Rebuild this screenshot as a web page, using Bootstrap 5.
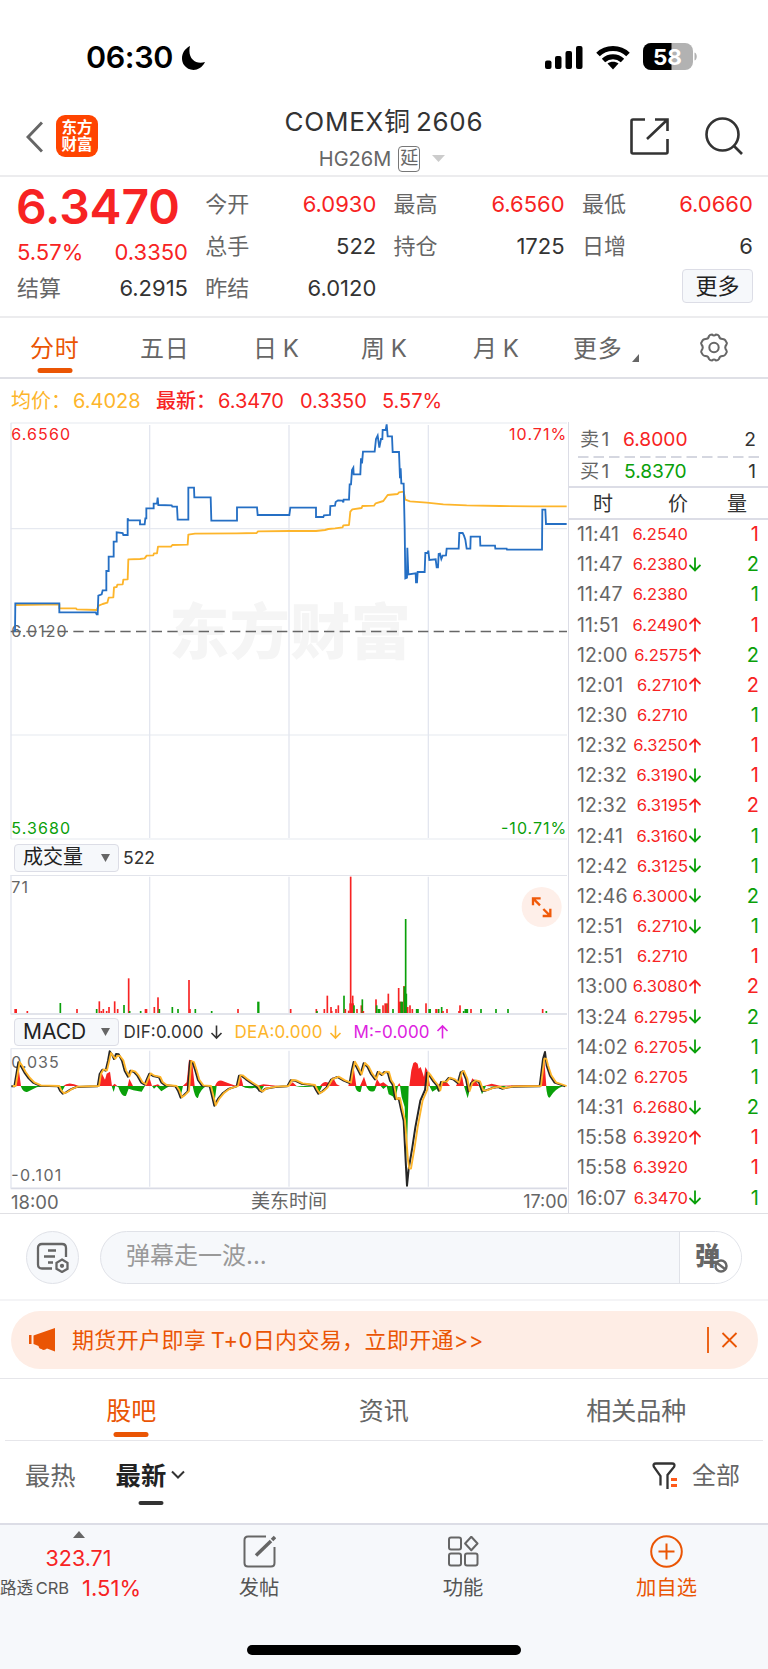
<!DOCTYPE html>
<html lang="zh-CN">
<head>
<meta charset="utf-8">
<meta name="viewport" content="width=device-width, initial-scale=1">
<title>COMEX铜2606</title>
<link href="https://cdn.jsdelivr.net/npm/bootstrap@5.3.0/dist/css/bootstrap.min.css" rel="stylesheet">
<style>
:root{--up:#f72323;--down:#0aa00a;--brand:#ea5504;--ink:#333;--mute:#666;--line:#dcdde6}
body{font-family:Inter,"Noto Sans CJK SC",sans-serif;color:var(--ink);background:#fff;width:768px;overflow-x:hidden}
svg{display:block;flex:none}
svg text{font-family:Inter,"Noto Sans CJK SC",sans-serif}
.up{color:var(--up)}.down{color:var(--down)}.brand{color:var(--brand)}.mute{color:var(--mute)}
.statusbar{height:96px;padding:19px 70px 0 86px}
.clock{font-size:30.5px;font-weight:600;color:#000;letter-spacing:-.4px;line-height:38px;width:95px;margin-top:19px}
.topbar{height:81px;border-bottom:2px solid #ececee;padding:0 25px 0 26px}
.logo{width:42px;height:42px;border-radius:9px;background:#ff4400;color:#fff;font-size:15.5px;line-height:17px;font-weight:700;margin-left:13px}
.head-title{font-size:26px;line-height:36px;letter-spacing:.75px;word-spacing:-3px}
.head-code{font-size:20px;line-height:26px}
.delay{border:1.5px solid #777;border-radius:4px;width:22px;height:26px;font-size:18px;line-height:22px}
.quote{height:141px;padding:6px 15px 0 17px;gap:17.3px;border-bottom:2px solid #ececee}
.quote>div{width:171px}
.qrow{height:42px;line-height:42px;font-size:22px;display:flex;justify-content:space-between}
.last-price{font-size:48px;font-weight:600;line-height:48px;height:48px;letter-spacing:-.1px;margin-left:-1px}
.more-btn{width:71px;height:34px;border:1.5px solid var(--line);border-radius:4px;background:#f6f8fb;font-size:22px;line-height:30px;padding:0;color:#222}
.periods{height:61px;border-bottom:2px solid #dfe0e6}
.periods>div{font-size:24px;line-height:62px;color:var(--mute);position:relative;white-space:nowrap;letter-spacing:.8px;word-spacing:-2.5px}
.bar-on{position:absolute;left:50%;transform:translateX(-50%);height:5px;width:35px;border-radius:3px;background:var(--brand)}
.legend-row{height:43px;line-height:45px;font-size:20px;padding-left:11px}
.market{height:792px;border-bottom:1.5px solid #e0e0e4}
.charts{width:568px}
.pick{width:105px;height:28px;border:1.5px solid var(--line);border-radius:4px;background:#f6f8fb;margin-left:14px;font-size:20px;line-height:25px;padding:0 8px;color:#222}
.pane-head{height:35px}
.tape{width:200px;border-left:1.5px solid var(--line)}
.book{height:33px;line-height:32px;font-size:19.2px;padding-left:11px}
.tape-head{height:34px;border-top:2px solid var(--line);border-bottom:2px solid var(--line);line-height:32px;font-size:20px}
.tick{height:30.16px;line-height:30px;padding-left:8px;position:relative;top:-1px}
.tick span:nth-child(1){width:54px;font-size:19.5px;color:var(--mute);letter-spacing:.1px}
.tick span:nth-child(2){width:57px;font-size:16.5px;text-align:right;color:var(--up);white-space:nowrap}
.tick span:nth-child(4){width:58px;font-size:20px;text-align:right}
.danmu{height:87px;border-bottom:2px solid #f4f4f6;padding:17px 26px 0}
.round-btn{width:53px;height:53px;border:1.5px solid #e0e2e8;border-radius:50%;background:#f6f8fb}
.say{width:642px;height:53px;border:1.5px solid #e0e2e8;border-radius:27px;overflow:hidden;background:#f6f8fb;margin-left:21px}
.say p{font-size:24px;line-height:47px;padding-left:25px;color:#999;width:579px;border-right:1.5px solid #e0e2e8}
.promo{margin:10px 10px 9px 11px;height:58px;border-radius:29px;background:#feede5;color:var(--brand);font-size:22px;padding:0 20px 0 17px}
.subject{height:62px;border-top:1.5px solid #e6e6ea}
.subject>div{width:252.5px;text-align:center;font-size:25px;line-height:64px;color:var(--mute);position:relative}
.sorts{height:82px;padding:0 28px 0 25px;font-size:25.3px;line-height:70px;position:relative}
.dock{height:146px;background:#f6f8fb;border-top:2px solid #dcdde6;position:relative;font-size:20.3px;color:#555}
.home-bar{position:absolute;left:247px;bottom:14px;width:274px;height:10px;border-radius:5px;background:#000}
</style>
<script src="https://cdn.jsdelivr.net/npm/bootstrap@5.3.0/dist/js/bootstrap.bundle.min.js"></script>
</head>
<body>
<div class="statusbar d-flex align-items-start">
  <div class="clock">06:30</div>
  <svg width="25" height="26" viewBox="0 0 25 26" style="margin-top:26px"><path d="M9 1C1 5 -1 14 3 20c5 7 16 7 21-3C15 20 6 14 9 1z" fill="#000"/></svg>
  <div class="ms-auto d-flex align-items-center" style="margin-top:24px">
    <svg width="40" height="25" viewBox="0 0 40 25"><rect x="1" y="15.500" width="6.500" height="8.500" rx="2"/><rect x="11" y="11" width="6.500" height="13" rx="2"/><rect x="21.500" y="6" width="6.500" height="18" rx="2"/><rect x="32" y="1" width="6.500" height="23" rx="2"/></svg>
    <svg style="margin-left:12px" width="34" height="25" viewBox="0 0 34 25" fill="none" stroke="#000" stroke-width="5"><path d="M2 9.500C10 1.500 24 1.500 32 9.500M7.500 15.500C13 10.500 21 10.500 26.500 15.500"/><path d="M17 24.500l-5.500-6c3-2.500 8-2.500 11 0z" fill="#000" stroke="none"/></svg>
    <svg style="margin-left:13px" width="55" height="28" viewBox="0 0 55 28"><rect width="50" height="27" rx="8" fill="#b2b2b2"/><path d="M8 0H28.500V27H8a8 8 0 0 1-8-8V8a8 8 0 0 1 8-8z"/><path d="M51.500 9.500c3 1 3 7 0 8z" fill="#b2b2b2"/><text x="24.500" y="21.500" font-size="22" font-weight="700" fill="#fff" text-anchor="middle" textLength="29" lengthAdjust="spacingAndGlyphs">58</text></svg>
  </div>
</div>
<div class="topbar d-flex align-items-start">
  <svg width="17" height="32" viewBox="0 0 17 32" style="margin-top:25px" fill="none" stroke="#666" stroke-width="3"><path d="M16 1.500 2 16 16 30.500"/></svg>
  <div class="logo text-center" style="margin-top:19px;padding-top:4px">东方<br>财富</div>
  <div class="text-center" style="padding:8px 0 0 0;width:330px;margin-left:121px">
    <div class="head-title">COMEX铜 2606</div>
    <div class="head-code d-flex justify-content-center align-items-center mute" style="margin:6px 0 0 -4px"><span>HG26M</span><span class="delay me-2" style="margin-left:7px">延</span><svg class="ms-1" width="13" height="8"><path d="M0 0h13L6.500 7z" fill="#ccc"/></svg></div>
  </div>
  <svg class="ms-auto" style="margin-top:22px" width="39" height="37" viewBox="0 0 39 37" fill="none" stroke="#333" stroke-width="2.600"><path d="M15 1.500H3Q1.500 1.500 1.500 3V34Q1.500 35.500 3 35.500H36Q37.500 35.500 37.500 34V21M25 1.500H37.500V13M37 2 17 21"/></svg>
  <svg style="margin:21px 0 0 36px" width="38" height="38" viewBox="0 0 38 38" fill="none" stroke="#333" stroke-width="2.600"><circle cx="17.500" cy="17.500" r="16"/><path d="M29 29l8 8"/></svg>
</div>
<div class="quote d-flex">
  <div><div class="last-price up">6.3470</div><div class="qrow up"><span>5.57%</span><span>0.3350</span></div><div class="qrow" style="margin-top:-6px"><span class="mute">结算</span><span>6.2915</span></div></div>
  <div><div class="qrow"><span class="mute">今开</span><span class="up">6.0930</span></div><div class="qrow"><span class="mute">总手</span><span>522</span></div><div class="qrow"><span class="mute">昨结</span><span>6.0120</span></div></div>
  <div><div class="qrow"><span class="mute">最高</span><span class="up">6.6560</span></div><div class="qrow"><span class="mute">持仓</span><span>1725</span></div></div>
  <div><div class="qrow"><span class="mute">最低</span><span class="up">6.0660</span></div><div class="qrow"><span class="mute">日增</span><span>6</span></div><div class="d-flex justify-content-end"><button class="more-btn" style="margin-top:2px">更多</button></div></div>
</div>
<div class="periods d-flex">
  <div style="margin-left:30px;width:110px" class="brand"><span class="brand">分时</span><i class="bar-on" style="left:25px;bottom:4px"></i></div>
  <div style="width:113px">五日</div><div style="width:108px">日 K</div><div style="width:112px">周 K</div><div style="width:100px">月 K</div>
  <div class="d-flex" style="width:126px">更多<svg width="8" height="8" style="margin:36px 0 0 9px"><path d="M7 0V8H0z" fill="#666"/></svg></div>
  <svg style="margin-top:15px" width="30" height="29" viewBox="0 0 30 29" fill="none" stroke="#666" stroke-width="2"><path d="M10 3Q11 1.500 13 1.500Q15 3.500 17 1.500Q19 1.500 20 3Q20.500 6 23.500 6Q26 6 27 8.500Q28.500 10 27.500 11.500Q25 14.500 27.500 17.500Q28.500 19 27 20.500Q26 23 23.500 23Q20.500 23 20 26Q19 27.500 17 27.500Q15 25.500 13 27.500Q11 27.500 10 26Q9.500 23 6.500 23Q4 23 3 20.500Q1.500 19 2.500 17.500Q5 14.500 2.500 11.500Q1.500 10 3 8.500Q4 6 6.500 6Q9.500 6 10 3z"/><circle cx="15" cy="14.500" r="4.700"/></svg>
</div>
<div class="legend-row d-flex up"><span style="color:#fdb52b;width:62px">均价：</span><span style="color:#fdb52b;width:83px">6.4028</span><span style="width:62px;font-weight:500">最新：</span><span style="width:82px">6.3470</span><span style="width:82px">0.3350</span><span>5.57%</span></div>
<div class="market d-flex">
  <div class="charts">
    <svg width="568" height="418" viewBox="0 21 1704 1254" fill="none">
      <text x="508" y="718" font-weight="900" font-size="180" fill="#f5f5f5" textLength="724">东方财富</text>
      <path d="M32 24H1701M32 341H1701M32 960H1701M32 1272H1701" stroke="#e6e9f0" stroke-width="3.500"/>
      <path d="M33 24V1272M449 30V1269M867 30V1269M1285 30V1269" stroke="#e3e6ef" stroke-width="4"/>
      <path d="M32 649.500H1701" stroke="#666" stroke-width="5" stroke-dasharray="31 16"/>
      <text x="34" y="667" font-size="48" fill="#666" textLength="166">6.0120</text>
      <polyline stroke="#fdb52b" stroke-width="5.500" stroke-linejoin="round" points="46,570 178,568 178,580 228,580 230,583 290,585 296,572 308,567 322,563 326,548 340,547 342,517 350,516 352,509 368,508 370,494 383,493 385,433 420,432 434,430 440,422 460,421 462,415 471,415 474,395 513,395 517,390 563,389 565,359 585,356 710,355 770,354 774,349 868,348 948,348 975,345 985,342 1005,340 1028,337 1030,331 1047,330 1051,290 1057,283 1085,279 1087,273 1122,272 1127,265 1150,258 1163,240 1193,237 1197,232 1211,230 1216,254 1230,259 1280,263 1330,268 1400,271 1500,273 1600,274 1700,274"/>
      <polyline stroke="#256fc4" stroke-width="5.500" points="45,650 46,565 178,565 178,592 287,592 290,598 293,598 295,542 305,538 308,526 319,526 319,468 326,468 326,425 341,425 341,380 350,380 350,352 368,354 370,360 383,360 383,310 386,316 420,316 420,328 434,328 436,310 439,310 439,280 461,280 461,266 471,266 473,248 475,270 515,271 517,275 531,275 533,314 565,314 565,218 582,218 583,247 632,247 634,317 711,317 711,277 771,277 773,300 868,300 871,278 948,278 948,306 970,306 972,301 990,300 991,273 1005,272 1007,261 1014,256 1028,257 1030,262 1031,254 1047,254 1049,208 1053,208 1056,165 1060,158 1061,178 1081,178 1083,130 1086,145 1089,110 1124,110 1128,72 1133,62 1138,98 1143,72 1147,72 1148,45 1157,45 1160,28 1163,64 1176,64 1178,111 1197,111 1200,190 1202,160 1204,205 1211,206 1214,340 1216,490 1221,488 1222,398 1225,478 1247,475 1248,502 1251,502 1253,471 1274,471 1276,414 1283,414 1285,407 1288,435 1307,433 1310,457 1314,457 1316,417 1320,416 1324,432 1328,422 1338,421 1340,401 1376,401 1378,354 1388,354 1392,362 1396,374 1400,401 1411,401 1412,365 1440,365 1441,392 1485,392 1486,401 1520,401 1521,404 1626,404 1627,284 1636,284 1638,327 1700,327"/>
      <g font-size="48"><text x="34" y="75" fill="#f72323" textLength="176">6.6560</text><text x="1527" y="75" fill="#f72323" textLength="172">10.71%</text><text x="34" y="1256" fill="#0aa00a" textLength="176">5.3680</text><text x="1503" y="1256" fill="#0aa00a" textLength="196">-10.71%</text></g>
    </svg>
    <div class="pane-head d-flex align-items-center"><div class="pick d-flex align-items-center justify-content-between"><span>成交量</span><svg width="9" height="8"><path d="M0 0h9L4.500 8z" fill="#666"/></svg></div><span style="font-size:17.500px;margin:2px 0 0 4px">522</span></div>
    <svg width="568" height="140" viewBox="0 165 1704 420" fill="none">
      <path d="M32 165H1701M32 582H1701" stroke="#d9dbe5" stroke-width="5"/>
      <path d="M33 165V582M449 170V579M867 170V579M1285 170V579" stroke="#e3e6ef" stroke-width="4"/>
      <g id="volumeBars"></g>
      <text x="34" y="220" font-size="48" fill="#666" textLength="50">71</text>
      <circle cx="1625" cy="261" r="60" fill="#feefe9"/><path d="M1599 256V235H1622M1600 236l20 20M1651 266V288H1628M1650 287l-20-20" stroke="#f05a0a" stroke-width="7"/>
    </svg>
    <div class="pane-head d-flex align-items-center" style="height:33px"><div class="pick d-flex align-items-center justify-content-between" style="font-size:21px"><span>MACD</span><svg width="9" height="8"><path d="M0 0h9L4.500 8z" fill="#666"/></svg></div><svg width="440" height="28" viewBox="0 0 440 28"><g font-size="17"><text x="4.500" y="20" fill="#333" textLength="80">DIF:0.000</text><text x="115.500" y="20" fill="#fdb52b" textLength="88">DEA:0.000</text><text x="234.500" y="20" fill="#dd22e0" textLength="76">M:-0.000</text></g><g fill="none" stroke-width="1.600"><path d="M97.500 7.500V20M92.500 15l5 5 5-5" stroke="#333"/><path d="M216.500 7.500V20M211.500 15l5 5 5-5" stroke="#fdb52b"/><path d="M323.500 20.500V8M318.500 13l5-5 5 5" stroke="#dd22e0"/></g></svg></div>
    <svg width="568" height="142" viewBox="0 113 1704 426" fill="none">
      <path d="M32 115H1701" stroke="#e6e9f0" stroke-width="3.500"/><path d="M32 534H1701" stroke="#d9dbe5" stroke-width="5"/>
      <path d="M33 115V534M449 121V529M867 121V529M1285 121V529" stroke="#e3e6ef" stroke-width="4"/>
      <text x="34" y="172" font-size="48" fill="#666" textLength="142">0.035</text><text x="34" y="512" font-size="48" fill="#666" textLength="150">-0.101</text>
      <path fill="#f72323" d="M44 227L54 160 63 227zM190 227Q205 212 237 227zM292 227L302 180 308 195 315 208 320 190 330 184 336 227 344 220 352 227zM383 227L388 205 399 227zM436 227L446 195 456 227 474 222 480 227zM548 227L560 216 567 148 576 150 584 227zM645 227Q652 208 666 211Q695 222 712 227L722 195 730 227zM768 227L790 222 835 227zM866 227L878 216 890 227zM960 227Q975 206 990 222L998 200 1010 222 1020 227zM1045 227L1060 165 1069 227zM1080 227L1092 199 1101 227zM1124 227L1131 206 1140 220 1150 216 1165 227zM1192 227L1198 218 1202 227zM1228 227L1234 180 1240 158 1246 155 1253 160 1256 175 1262 170 1272 200 1276 170 1282 180 1290 227zM1310 227L1322 218 1340 215 1350 227zM1368 227L1385 192 1392 227zM1408 227L1417 204 1428 214 1438 227zM1452 227L1475 220 1500 226 1560 225 1620 225V227zM1622 227L1632 138 1639 227z"/>
      <path fill="#0aa00a" d="M62 227Q70 248 83 244L110 231 130 227zM178 227L186 243 195 227zM335 227L341 245 346 227L355 230Q366 262 378 256L386 235 400 240 425 244 435 227zM456 227L462 235 470 228L484 243 500 232 510 227zM530 227L541 262 549 227zM578 227Q586 268 594 262Q602 235 620 227zM632 227L643 280 650 227zM725 227Q740 238 765 232L782 243 792 227zM885 227Q910 233 945 228L957 247 967 227zM1065 227Q1070 248 1082 244L1086 227zM1098 227Q1108 250 1124 241L1130 227zM1142 227L1150 236 1160 228L1166 252 1178 258 1185 270 1194 228 1200 227 1205 260 1214 290 1220 450 1226 227zM1288 227L1297 244 1310 236 1315 245 1322 227zM1392 227L1403 264 1412 227zM1438 227L1446 252 1458 227 1490 229 1500 235 1520 227zM1638 227Q1642 268 1650 261Q1665 235 1690 227z"/>
      <polyline transform="translate(-4 1)" id="dif" stroke="#262626" stroke-width="6" stroke-linejoin="round"/>
      <polyline id="dea" stroke="#fdb52b" stroke-width="5.500" stroke-linejoin="round"/>
    </svg>
    <div class="d-flex justify-content-between mute" style="font-size:18.500px;line-height:26px;height:24px;padding-left:11px;margin-top:-1px"><span>18:00</span><span style="margin-left:-4px;font-size:19px">美东时间</span><span style="font-size:18px">17:00</span></div>
  </div>
  <div class="tape">
    <div class="d-flex book" style="height:34px;line-height:34px"><span class="mute" style="width:43px;word-spacing:-3px">卖 1</span><span class="up">6.8000</span><span class="ms-auto" style="padding-right:12px">2</span></div>
    <svg width="192" height="2"><path d="M9 1H192" stroke="#d5d7e0" stroke-width="2" stroke-dasharray="10.500 5"/></svg>
    <div class="d-flex book" style="height:28px;line-height:26px"><span class="mute" style="width:44px;word-spacing:-3px">买 1</span><span class="down">5.8370</span><span class="ms-auto" style="padding-right:12px">1</span></div>
    <div class="tape-head d-flex"><span style="width:75px;padding-left:24px">时</span><span style="width:60px;padding-left:24px">价</span><span style="padding-left:23px">量</span></div>
    <div id="ticks"></div>
  </div>
</div>
<div class="danmu d-flex">
  <div class="round-btn d-flex align-items-center justify-content-center"><svg width="33" height="31" viewBox="0 0 33 31" fill="none" stroke="#666" stroke-width="2.300"><path d="M16 26.500H6Q2 26.500 2 22.500V6Q2 2 6 2H26Q30 2 30 6V15M12 8.500H20M8 14.500H19M12 20.500H17"/><path d="M26 17.500l5.500 3.300v6L26 30l-5.500-3.200v-6z"/><circle cx="26" cy="23.800" r="1" fill="#666"/></svg></div>
  <div class="say d-flex"><p class="mb-0">弹幕走一波...</p><div class="bg-white flex-grow-1 position-relative"><span class="mute" style="font-size:25px;font-weight:900;line-height:48px;padding-left:15px">弹</span><svg class="position-absolute" style="left:33px;top:26px" width="16" height="16" viewBox="0 0 16 16"><circle cx="8" cy="8" r="5.500" fill="#fff" stroke="#666" stroke-width="2.500"/><path d="M4 5l8 6" stroke="#666" stroke-width="2.500"/></svg></div></div>
</div>
<div class="promo d-flex align-items-center">
  <svg width="28" height="24" viewBox="0 0 28 24" fill="#ea5504"><path d="M1 7h2.500v9H1zM5.500 7.500L27 0V23.500L19 20.500Q16 23 13.500 21Q11 21 10.500 18L5.500 16z"/></svg>
  <span style="margin-left:16px;letter-spacing:.35px;word-spacing:-2px">期货开户即享 T+0日内交易，立即开通&gt;&gt;</span>
  <svg class="ms-auto" width="32" height="26" viewBox="0 0 32 26" fill="none" stroke="#ea5504" stroke-width="1.800"><path d="M2 0V26M16.500 6l14 14M30.500 6l-14 14"/></svg>
</div>
<div class="subject d-flex" style="padding-left:5px"><div><span class="brand">股吧</span><i class="bar-on" style="bottom:3px"></i></div><div>资讯</div><div>相关品种</div></div>
<div style="margin:0 5px;border-top:1.500px solid #e6e6ea"></div>
<div class="sorts d-flex mute"><span>最热</span><span style="margin-left:40px;font-weight:700;color:#222">最新</span><svg style="margin:29px 0 0 5px" width="14" height="10" fill="none" stroke="#333" stroke-width="2"><path d="M1 1.500l6 6 6-6"/></svg><i class="bar-on" style="left:151px;bottom:18px;width:25px;height:4px;background:#333"></i>
  <svg class="ms-auto" style="margin-top:21px" width="26" height="28" viewBox="0 0 26 28" fill="none"><path d="M8.500 23.500V14L2 5Q.5 1.500 4 1.500H20Q23.500 1.500 22 5L15.500 13V27" stroke="#333" stroke-width="2.300"/><path d="M19 17.500h6M19 23.500h6" stroke="#ff5a1a" stroke-width="3"/></svg><span style="margin-left:14px;font-size:24px">全部</span></div>
<div class="dock">
  <div class="d-flex">
    <div style="width:157px;text-align:center;padding-top:6px"><svg class="mx-auto" width="12" height="7"><path d="M0 7h12L6 0z" fill="#666"/></svg><div class="up" style="font-size:21.500px;line-height:34px;margin-top:3px">323.71</div><div class="d-flex text-nowrap" style="line-height:26px"><span style="font-size:16.500px;word-spacing:-2px">路透 CRB</span><span class="up" style="font-size:22px;margin-left:13px">1.51%</span></div></div>
    <div class="text-center" style="width:204px"><svg class="mx-auto" style="margin-top:10px" width="33" height="33" viewBox="0 0 33 33" fill="none" stroke="#666" stroke-width="2"><path d="M23 1.500H5Q1.500 1.500 1.500 5V28Q1.500 31.500 5 31.500H28Q31.500 31.500 31.500 28V12"/><path d="M13 20.500L28 6" stroke-width="3.500"/><path d="M29 5l3-3" stroke-width="3.500"/></svg><div style="line-height:34px;margin-top:3px">发帖</div></div>
    <div class="text-center" style="width:204px"><svg class="mx-auto" style="margin-top:11px" width="31" height="31" viewBox="0 0 31 31" fill="none" stroke="#666" stroke-width="2"><rect x="1" y="1.500" width="12" height="12" rx="2"/><rect x="1" y="17.500" width="12" height="12" rx="2"/><rect x="17" y="17.500" width="12.500" height="12" rx="2"/><path d="M23.300.800l6.200 6.700-6.200 6.700-6.200-6.700z" stroke-linejoin="round"/></svg><div style="line-height:34px;margin-top:4px">功能</div></div>
    <div class="text-center brand" style="width:203px"><svg class="mx-auto" style="margin-top:10px" width="33" height="33" viewBox="0 0 33 33" fill="none" stroke="#ea5504" stroke-width="2"><circle cx="16.500" cy="16.500" r="15.300"/><path d="M8.500 16.500h16M16.500 8.500v16"/></svg><div style="line-height:34px;margin-top:3px">加自选</div></div>
  </div>
  <div class="home-bar"></div>
</div>
<script>
// trades: time, price, direction of the last move (u/d/-), size, side (r = buy, g = sell)
const trades=`11:41 6.2540 - 1 r|11:47 6.2380 d 2 g|11:47 6.2380 - 1 g|11:51 6.2490 u 1 r|12:00 6.2575 u 2 g|12:01 6.2710 u 2 r|12:30 6.2710 - 1 g|12:32 6.3250 u 1 r|12:32 6.3190 d 1 r|12:32 6.3195 u 2 r|12:41 6.3160 d 1 g|12:42 6.3125 d 1 g|12:46 6.3000 d 2 g|12:51 6.2710 d 1 g|12:51 6.2710 - 1 r|13:00 6.3080 u 2 r|13:24 6.2795 d 2 g|14:02 6.2705 d 1 g|14:02 6.2705 - 1 g|14:31 6.2680 d 2 g|15:58 6.3920 u 1 r|15:58 6.3920 - 1 r|16:07 6.3470 d 1 g`;
const arrow={u:'<path d="M7 14.500V1.500M1.500 7L7 1.500 12.500 7" stroke="#f72323"/>',d:'<path d="M7 .500V13.500M1.500 8L7 13.500 12.500 8" stroke="#0aa00a"/>','-':''};
document.getElementById('ticks').innerHTML=trades.split('|').map(r=>{const [t,p,a,q,s]=r.split(' ');return `<div class="tick d-flex align-items-center"><span>${t}</span><span>${p}</span><svg width="13" height="15" fill="none" stroke-width="1.800">${arrow[a]}</svg><span class="${s=='r'?'up':'down'}">${q}</span></div>`}).join('');
// volume bars: x, top, colour
const vol=[[47,567,'r',8],[82,573,'r'],[181,549,'g'],[231,567,'r'],[290,567,'g'],[298,544,'r'],[304,573,'r'],[310,567,'r'],[320,573,'r'],[327,561,'r'],[344,544,'r'],[353,567,'r'],[372,555,'g'],[386,475,'r'],[389,573,'g'],[422,573,'g'],[438,567,'r',8],[463,561,'r'],[474,532,'r'],[478,567,'g'],[517,561,'g'],[534,567,'g'],[567,480,'r'],[570,567,'r'],[586,567,'g'],[635,573,'g'],[714,567,'r'],[775,545,'g',7],[872,567,'r'],[949,567,'r'],[951,573,'g'],[973,567,'r'],[982,527,'r'],[993,561,'r'],[995,573,'r'],[1008,567,'r'],[1015,556,'r'],[1032,527,'g'],[1036,567,'r'],[1046,572,'r'],[1052,170,'r',5],[1055,550,'r',14],[1058,527,'r'],[1062,556,'g'],[1071,567,'r'],[1084,556,'r'],[1087,538,'g'],[1090,573,'r'],[1128,538,'r'],[1130,556,'g'],[1137,567,'g',9],[1149,556,'r'],[1157,550,'r',8],[1164,550,'g'],[1165,521,'r'],[1179,567,'g'],[1196,504,'r'],[1201,545,'r',8],[1205,545,'g',8],[1212,498,'r'],[1213,500,'g'],[1217,297,'g',5],[1219,521,'g'],[1223,561,'r'],[1230,556,'r'],[1237,567,'r'],[1252,567,'g',9],[1278,550,'r'],[1289,567,'g',8],[1309,567,'r',7],[1316,567,'g'],[1325,561,'g'],[1329,573,'r'],[1341,567,'r'],[1377,573,'r'],[1380,556,'r'],[1391,573,'g'],[1399,567,'g',11],[1413,567,'r'],[1443,567,'g'],[1488,567,'g'],[1524,567,'g'],[1628,567,'r'],[1639,573,'g']];
document.getElementById('volumeBars').innerHTML=vol.map(([x,y,c,w=5])=>`<rect x="${x-w/2}" y="${y}" width="${w}" height="${579-y}" fill="${c=='r'?'#f72323':'#0aa00a'}"/>`).join('');
// indicator lines share their turning points; DEA trails DIF slightly
const dif="38,227 47,227 54,185 59,155 67,167 77,185 90,203 103,216 123,225 178,227 184,240 192,249 202,245 216,236 233,229 297,227 303,190 311,177 321,180 328,150 333,122 341,133 346,145 352,130 360,131 370,150 378,180 388,198 395,180 406,184 416,195 428,216 438,222 445,205 452,189 463,196 474,198 481,200 488,215 500,224 530,227 538,240 546,261 556,253 567,242 574,152 582,155 590,180 598,208 610,225 633,227 641,260 647,285 658,265 673,247 689,235 714,227 721,195 728,195 742,206 755,215 775,228 782,240 789,243 800,234 830,229 866,227 876,209 889,210 908,219 945,224 952,238 959,249 971,242 983,231 997,207 1016,199 1035,210 1053,217 1059,180 1065,154 1074,170 1085,192 1095,158 1106,168 1117,190 1129,206 1137,184 1149,193 1157,184 1167,185 1174,210 1182,222 1190,266 1200,263 1208,300 1215,330 1221,450 1225,525 1230,475 1241,410 1250,350 1265,270 1279,238 1285,186 1293,196 1304,212 1315,225 1321,240 1327,214 1340,214 1350,202 1365,207 1377,217 1386,185 1392,182 1402,205 1409,242 1417,218 1428,210 1440,213 1450,240 1460,240 1484,231 1499,229 1510,234 1540,228 1623,227 1633,145 1639,124 1644,165 1654,195 1668,216 1700,227";
document.getElementById('dif').setAttribute('points',dif);
document.getElementById('dea').setAttribute('points',dif.split(' ').map(p=>{let [x,y]=p.split(',').map(Number);if(y>470)y=475;if(y<140)y+=6;if(x>1215&&x<1285)x+=3;if(x>1630&&x<1645)y=Math.max(y,145);return x+','+y}).join(' '));
</script>
</body>
</html>
